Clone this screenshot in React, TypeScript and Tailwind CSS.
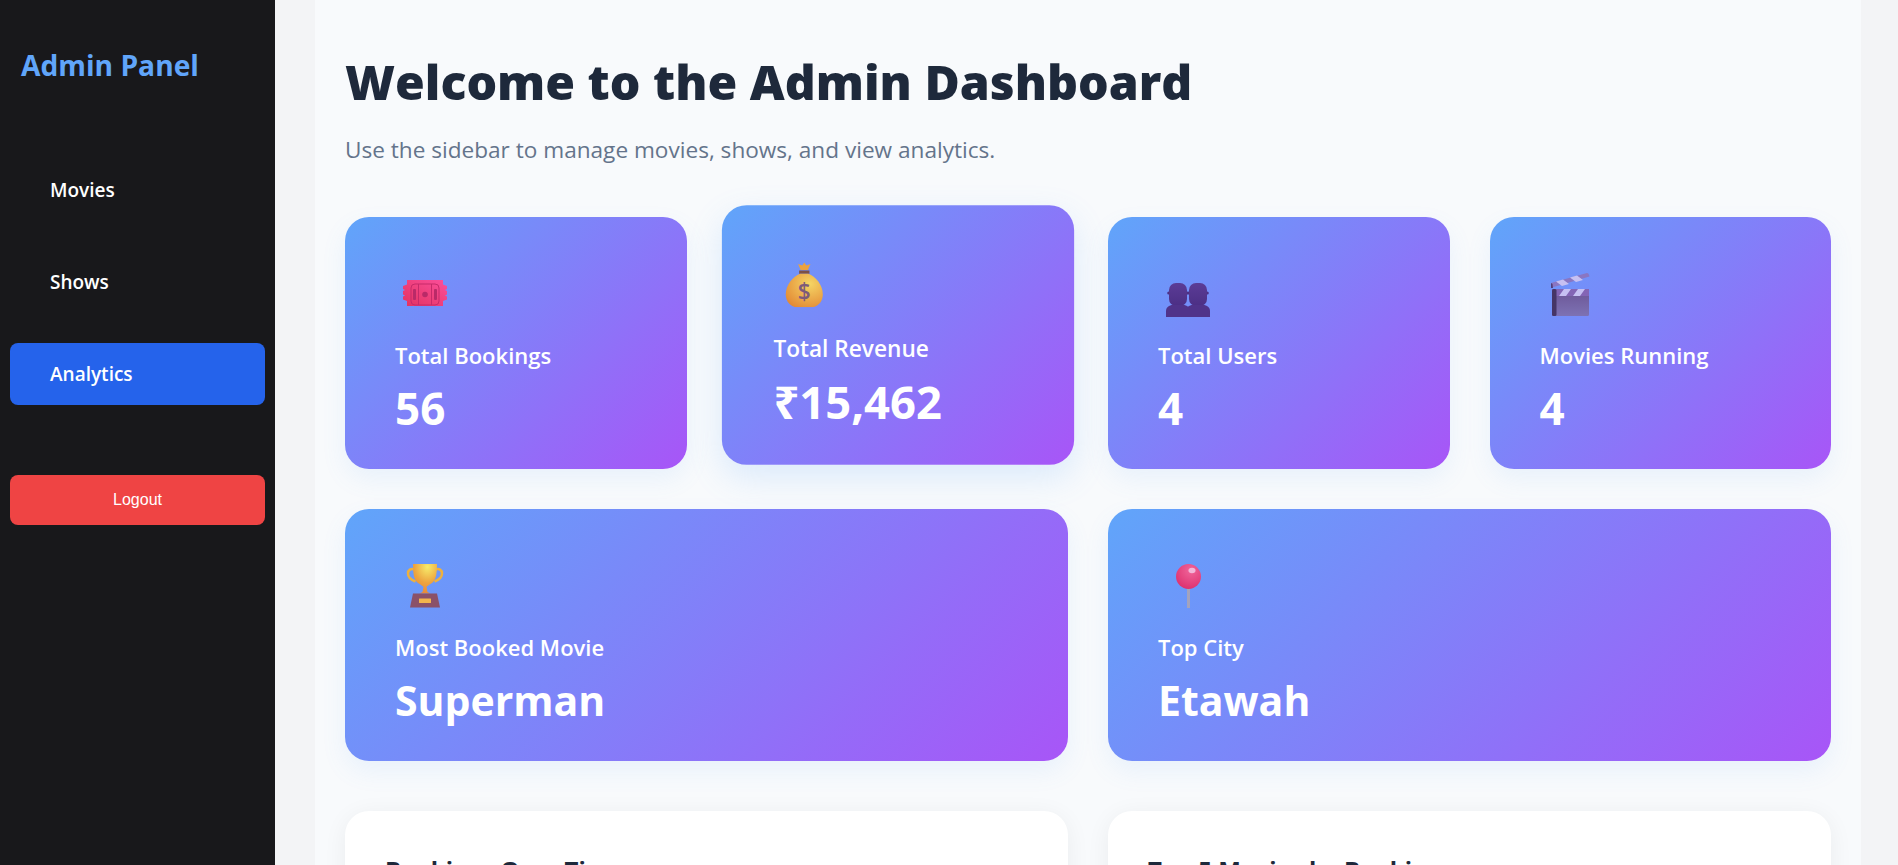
import React from "react";

const F = "font-['Open_Sans','Noto_Sans',sans-serif]";

function Ticket() {
  return (
    <svg viewBox="0 0 44 44" className="w-full h-full">
      <defs>
        <linearGradient id="tk" x1="0" y1="1" x2="1" y2="0">
          <stop offset="0" stopColor="#e2325f" />
          <stop offset="1" stopColor="#fb4f9c" />
        </linearGradient>
      </defs>
      <path fill="url(#tk)" d="M4 8h36v4.500l4 1.500v3l-2 1 2 1v3.500l-2 1 2 1v3l-4 1.500v5H4v-5l-4-1.500v-3l2-1-2-1v-3.500l2-1-2-1v-3l4-1.500z" />
      <rect x="8" y="12" width="28" height="21" rx="4" fill="none" stroke="#c72a6a" strokeWidth="1" />
      <path d="M15.500 12v21M28.500 12v21" stroke="#c72a6a" strokeWidth="1" />
      <rect x="10" y="17" width="3" height="11" rx="1" fill="#b92a68" />
      <rect x="31" y="17" width="3" height="11" rx="1" fill="#b92a68" />
      <circle cx="22" cy="22.500" r="2.800" fill="#b92a68" />
    </svg>
  );
}

function Bag() {
  return (
    <svg viewBox="0 0 44 44" className="w-full h-full">
      <defs>
        <radialGradient id="bg" cx="0.65" cy="0.3" r="0.8">
          <stop offset="0" stopColor="#f5d565" />
          <stop offset="1" stopColor="#e38a35" />
        </radialGradient>
      </defs>
      <path fill="#eba23e" d="M16 2l4 1.500 2-3 2 3 4-1.500-2.500 6h-7z" />
      <path fill="#7d5147" d="M17 8.500h10v3H17z" />
      <path fill="url(#bg)" d="M18 11.500h8c7 2.500 14 11 14 20 0 7.500-5 12.500-11 12.500H15C9 44 4 39 4 31.500c0-9 7-17.500 14-20z" />
      <text x="22" y="37" textAnchor="middle" fontSize="22" fontWeight="600" fill="#7d5a7a" fontFamily="'Open Sans',sans-serif">$</text>
    </svg>
  );
}

function Users() {
  const bust = (x: number) => (
    <g key={x} transform={`translate(${x} 0)`}>
      <circle cx="2.800" cy="21" r="1.600" fill="#4c2f85" />
      <circle cx="21.200" cy="21" r="1.600" fill="#4c2f85" />
      <rect x="3" y="11" width="18" height="23" rx="7" fill="url(#us)" />
      <path d="M0 45v-6c0-3.500 3-6 7-6h10c4 0 7 2.500 7 6v6z" fill="#50338a" />
    </g>
  );
  return (
    <svg viewBox="0 0 44 46" className="w-full h-[46px] overflow-visible">
      <defs>
        <linearGradient id="us" x1="0" y1="0" x2="0" y2="1">
          <stop offset="0" stopColor="#5b3c96" />
          <stop offset="1" stopColor="#4c2f85" />
        </linearGradient>
      </defs>
      {bust(20)}
      {bust(0)}
    </svg>
  );
}

function Clapper() {
  return (
    <svg viewBox="0 0 44 44" className="w-full h-full">
      <defs>
        <linearGradient id="cl" x1="0" y1="0" x2="0" y2="1">
          <stop offset="0" stopColor="#6b5494" />
          <stop offset="1" stopColor="#7d72b4" />
        </linearGradient>
      </defs>
      <path fill="#8a76c2" d="M3 11L39 1c1 0 2 1 2.500 3.500L4 15.500z" />
      <path fill="#c6c0f2" d="M8 9.500l7-2 6 4.500-7 2zM22 5.500l7-2 6 4.500-7 2z" />
      <path fill="#52407c" d="M3 11v5h2l-.5-4z" />
      <rect x="4" y="17" width="37" height="27" rx="1.500" fill="url(#cl)" />
      <rect x="4" y="17" width="37" height="7" fill="#8365b5" />
      <path fill="#c6c0f2" d="M11 24l5-7h7l-5 7zM25 24l5-7h7l-5 7z" />
      <rect x="4" y="17" width="4.500" height="27" rx="1.500" fill="#453566" />
    </svg>
  );
}

function Trophy() {
  return (
    <svg viewBox="0 0 44 44" className="w-full h-full">
      <defs>
        <radialGradient id="tr" cx="0.6" cy="0.1" r="0.9">
          <stop offset="0" stopColor="#f7ec6a" />
          <stop offset="0.6" stopColor="#eda43f" />
          <stop offset="1" stopColor="#e88a3a" />
        </radialGradient>
      </defs>
      <path d="M11 5.500C8 4 5 6 5 9.500c0 4 3.500 6.500 7.500 8M33 5.500c3-1.500 6 .5 6 4 0 4-3.500 6.500-7.500 8" fill="none" stroke="#eeb13e" strokeWidth="2.500" />
      <path fill="url(#tr)" d="M10 0h24c0 10-1 16-5 19-3 2-5 3-5.500 4l1 5 3 1.500h-11l3-1.500 1-5c-.5-1-2.500-2-5.500-4-4-3-5-9-5-19z" />
      <path fill="#8a5169" d="M10 29.500h24l3 14H7z" />
      <rect x="16" y="34.500" width="12" height="4.500" rx="0.500" fill="#f2b54d" />
    </svg>
  );
}

function Pin() {
  return (
    <svg viewBox="0 0 44 44" className="w-full h-full">
      <defs>
        <radialGradient id="pn" cx="0.6" cy="0.25" r="0.8">
          <stop offset="0" stopColor="#f0659a" />
          <stop offset="1" stopColor="#dd2f6d" />
        </radialGradient>
      </defs>
      <rect x="21" y="24" width="3" height="20" fill="#a3a3bd" />
      <circle cx="22.500" cy="12.500" r="12.500" fill="url(#pn)" />
      <ellipse cx="26" cy="6.500" rx="3.500" ry="2.800" fill="#f3b6d8" />
    </svg>
  );
}

function Card({ icon, label, value, className = "", valueSize = "text-[41px]" }: { icon: React.ReactNode; label: string; value: string; className?: string; valueSize?: string }) {
  return (
    <div className={`h-[252px] rounded-[24px] bg-[linear-gradient(135deg,#60a5fa,#a855f7)] text-white px-[50px] pt-[55px] ${className}`}>
      <div className="ml-2 w-11 h-11">{icon}</div>
      <div className="mt-[24px] text-[22px] leading-[30px] font-semibold">{label}</div>
      <div className={`mt-[10px] leading-[56px] font-bold ${valueSize}`}>{value}</div>
    </div>
  );
}

const soft = "shadow-[0_10px_25px_rgba(96,165,250,0.10)]";

export default function App() {
  return (
    <div className={`flex h-[865px] overflow-hidden bg-[#f3f4f6] ${F}`}>
      <aside className="w-[275px] shrink-0 bg-[#18181b] px-[10px] pt-[46px]">
        <div className="pl-[11px] text-[28.200px] leading-[38px] font-bold text-[#60a5fa]">Admin Panel</div>
        <nav className="mt-[75px] flex flex-col gap-[30px]">
          {["Movies", "Shows", "Analytics"].map((t) => (
            <div key={t} className={`h-[62px] rounded-lg pl-10 flex items-center text-[19px] font-semibold text-white ${t === "Analytics" ? "bg-[#2563eb]" : ""}`}>{t}</div>
          ))}
        </nav>
        <div className="mt-[70px] h-[50px] rounded-lg bg-[#ef4444] text-white flex items-center justify-center text-base font-['Liberation_Sans',sans-serif]">Logout</div>
      </aside>
      <main className="flex-1 ml-10 mr-[37px]">
        <div className="h-full bg-[#f8fafc] px-[30px] pt-[46px]">
          <h1 className="text-[48.200px] leading-[70px] font-extrabold text-[#1e293b]">Welcome to the Admin Dashboard</h1>
          <p className="mt-[18px] text-[22.600px] leading-8 text-[#64748b]">Use the sidebar to manage movies, shows, and view analytics.</p>
          <div className="mt-[51px] grid grid-cols-4 gap-10">
            <Card icon={<Ticket />} label="Total Bookings" value="56" valueSize="text-[44px]" className={soft} />
            <Card icon={<Bag />} label="Total Revenue" value="₹15,462" valueSize="text-[44px]" className="-translate-y-2 scale-[1.03] shadow-[0_12px_32px_rgba(96,165,250,0.18)]" />
            <Card icon={<Users />} label="Total Users" value="4" valueSize="text-[44px]" className={soft} />
            <Card icon={<Clapper />} label="Movies Running" value="4" valueSize="text-[44px]" className={soft} />
          </div>
          <div className="mt-10 grid grid-cols-2 gap-10">
            <Card icon={<Trophy />} label="Most Booked Movie" value="Superman" className={soft} />
            <Card icon={<Pin />} label="Top City" value="Etawah" className={soft} />
          </div>
          <div className="mt-[50px] grid grid-cols-2 gap-10">
            {["Bookings Over Time", "Top 5 Movies by Bookings"].map((t) => (
              <div key={t} className="h-[300px] rounded-[24px] bg-white px-10 pt-[43px] shadow-[0_4px_24px_rgba(0,0,0,0.06)]">
                <div className="text-[24px] leading-8 font-bold text-[#1e293b]">{t}</div>
              </div>
            ))}
          </div>
        </div>
      </main>
    </div>
  );
}
